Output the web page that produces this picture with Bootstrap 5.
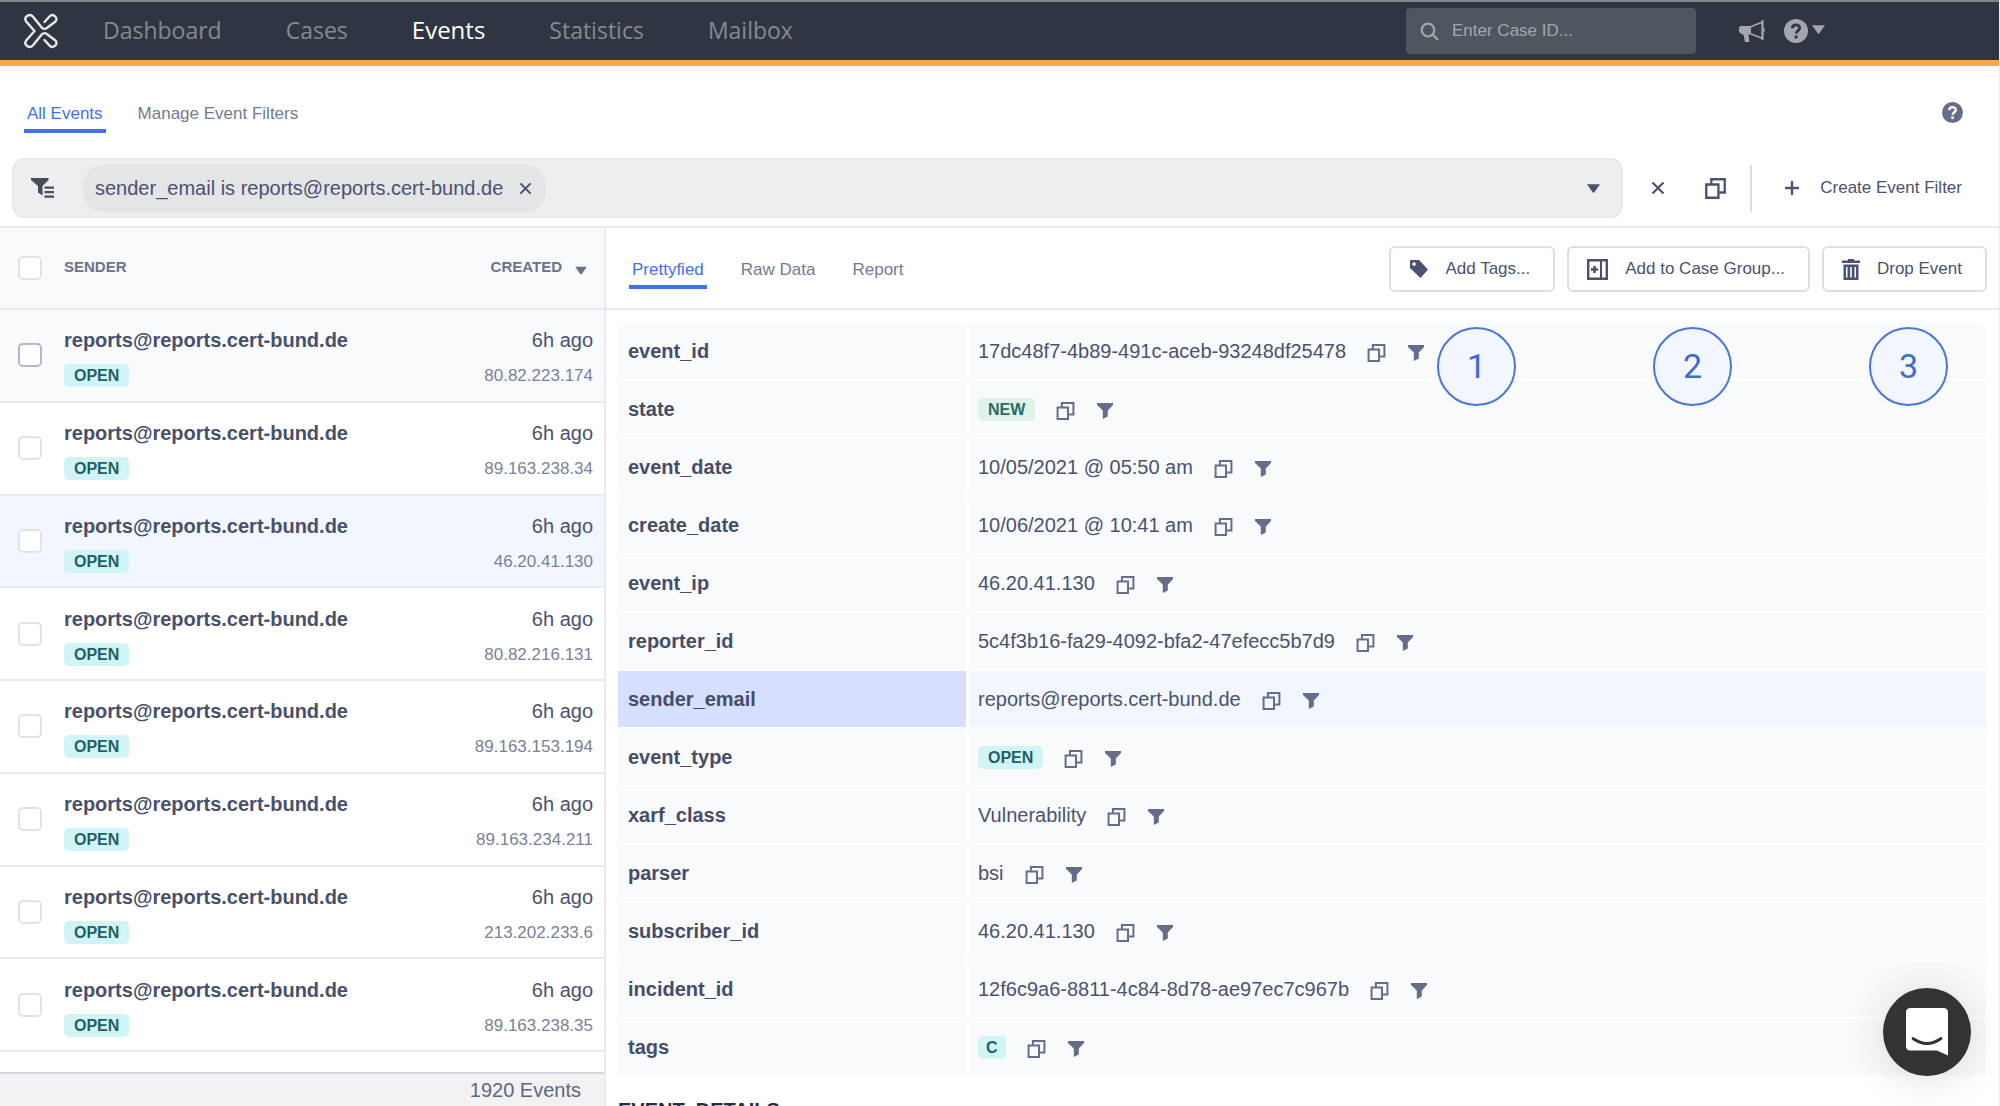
<!DOCTYPE html>
<html lang="en">
<head>
<meta charset="utf-8">
<meta name="viewport" content="width=device-width, initial-scale=1">
<title>Events</title>
<link href="https://cdn.jsdelivr.net/npm/bootstrap@5.3.0/dist/css/bootstrap.min.css" rel="stylesheet">
<style>
:root{--ink:#4a5270;--muted:#6a7290;--blue:#4070f5;--line:#e8eaf2;--soft:#f9fafc;}
body{font-family:"Liberation Sans",Arial,sans-serif;font-size:20px;line-height:24px;color:var(--ink);border-right:1px solid #ececf0;background:#fff}
a{text-decoration:none}
svg{display:block;flex:none}
button.plain{border:0;background:none;padding:0;color:inherit}
.fs-s{font-size:17px}
/* top bar */
.topbar{background:#303641;border-top:2px solid #7f838a;border-bottom:6px solid #f4aa45;height:66px;color:#a3a6ae}
.topnav{gap:64px;margin-left:45px;padding-bottom:3px;font-family:"Open Sans","Noto Sans",sans-serif;font-size:23px}
.topnav a{color:#858991}
.topnav a.active{color:#fff;font-size:24px}
.case-search{width:290px;height:46px;background:#50565f;border-radius:4px;padding:0 14px;gap:13px}
.case-search input{background:none;border:0;outline:0;color:#fff;font-size:17px;width:100%;padding:0}
.case-search input::placeholder{color:#a3a6ae;opacity:1}
.top-tools{width:303px;padding-left:43px;gap:19px}
/* tabs */
.tabline{gap:29px;font-size:17px}
.tabline a{color:#737a92;padding:0 3px 3px;border-bottom:4px solid transparent}
.tabline a.active{color:var(--blue);border-bottom-color:var(--blue)}
.subbar{padding:36px 36px 25px 24px}
/* filter */
.filterrow{padding:0 37px 8px 12px;border-bottom:2px solid var(--line);color:var(--ink)}
.filterbox{height:60px;background:#edeef0;border:2px solid #e8e8ee;border-radius:12px;padding:0 21px 0 17px}
.chip{height:47px;background:#e4e5e7;border-radius:20px;padding:0 14px 0 12px;gap:16px;margin-left:28px}
.filter-tools{gap:40px;margin-left:28px}
.vline{width:2px;height:47px;background:#dcdde6;margin-left:24px}
.create{margin-left:33px;gap:21px}
/* list */
.side{width:606px;border-right:2px solid var(--line);flex:none}
.side-head{height:82px;background:var(--soft);border-bottom:2px solid var(--line);padding:0 16px 0 18px;font-size:15px;font-weight:700;color:var(--muted)}
.side-head .titles{margin-left:22px;padding-bottom:2px}
.evlist{padding-bottom:20px}
.evrow{flex:1 1 0;border-bottom:2px solid var(--line);padding:0 11px 0 18px;min-height:0}
.evrow.hov{background:var(--soft)}
.evrow.sel{background:#f2f6fe}
.evbody{margin-left:22px;padding-top:6px}
.evrow b{color:#48506b}
.ip{font-size:17px;color:#7b8199}
.form-check-input.cb{width:24px;height:24px;margin:0;border:2px solid #e1e3ec;border-radius:5px;background-color:#fff;flex:none}
.hov .cb.cb{border-color:#b1b8cb}
.pill{display:inline-block;font-size:16px;font-weight:700;line-height:23px;height:23px;padding:0 10px;border-radius:5px;background:#d1f4f6;color:#1f5f66}
.pill-new{background:#dff3ea;color:#2a6b63}
.pill-tag{padding:0 8px}
.side-foot{height:34px;background:#f2f2f5;border-top:2px solid #d6d8df;padding-right:23px;color:#5f6680}
/* detail */
.detail-head{height:82px;border-bottom:2px solid var(--line);padding:0 12px 0 23px}
.detail-head .tabline{padding-top:30px;gap:31px}
.tool-btn{height:46px;margin-top:18px;background:#fff;border:2px solid #dcdfe9;border-radius:6px;padding:0 23px 0 18px;font-size:17px;color:var(--ink);gap:17px}
.detail-body{padding:13px 13px 0 12px}
.kv{border-collapse:separate;border-spacing:0;table-layout:fixed;width:100%}
.kv th,.kv td{height:58px;background:var(--soft);border-bottom:2px solid #fff;padding:0 9px;vertical-align:middle}
.kv th{width:351px;border-right:3px solid #fff;padding-left:10px;color:#464d68}
.kv tr:first-child th{border-top-left-radius:8px}
.kv tr:first-child td{border-top-right-radius:8px}
.kv tr.hit th{background:#d6dffe}
.kv tr.hit td{background:#f2f6fe}
.val{display:flex;align-items:center}
.val button{margin:3px 0 0 21px!important;color:#666d8b}
.val button+button{margin-left:22px!important}
.section-title{font-size:20px;font-weight:700;color:#262b44;margin:21px 0 0;line-height:24px}
.steps{top:17px;right:51px;gap:137px}
.step{width:79px;height:79px;border:2px solid #4a76d4;border-radius:50%;background:#f2f6fe;color:#3f6bd0;font:34px/1 Roboto,sans-serif;padding-bottom:2px}
.chat{right:29px;bottom:30px;width:88px;height:88px;border-radius:50%;border:0;background:#333;box-shadow:0 2px 40px rgba(0,0,0,.14)}
</style>
<script src="https://cdn.jsdelivr.net/npm/bootstrap@5.3.0/dist/js/bootstrap.bundle.min.js"></script>
</head>
<body class="vh-100 overflow-hidden d-flex flex-column">
<svg width="0" height="0" class="position-absolute" aria-hidden="true">
  <symbol id="copy" viewBox="0 0 20 20"><path d="M1.200 6.200h11.600v12.600H1.200z M6 5.500V1.200h12.800v12.600H14" fill="none" stroke="currentColor" stroke-width="2.200"/></symbol>
  <symbol id="funnel" viewBox="0 0 16 16"><path d="M0 0h16v2L10.800 7.500v6L5.800 16V7.500L0 2z" fill="currentColor"/></symbol>
  <symbol id="caret" viewBox="0 0 12 8"><path d="M0 0h12L6.800 7.500q-.8.8-1.600 0z" fill="currentColor"/></symbol>
  <symbol id="cross" viewBox="0 0 14 14"><path d="M1.500 1.500l11 11M12.500 1.500l-11 11" stroke="currentColor" stroke-width="2.200" fill="none"/></symbol>
  <symbol id="help" viewBox="0 0 24 24"><circle cx="12" cy="12" r="12" fill="currentColor"/><path d="M8.300 9.300C8.300 4.700 15.800 4.800 15.700 9.100c0 2.700-3.500 2.800-3.500 5.400" fill="none" stroke="var(--hole)" stroke-width="2.700"/><circle cx="12.100" cy="18" r="1.700" fill="var(--hole)"/></symbol>
</svg>

<header class="topbar d-flex align-items-center flex-shrink-0">
  <a href="#" aria-label="Home" class="ms-4"><svg width="34" height="36" viewBox="0 0 34 35" fill="none" stroke="#e8e9eb" stroke-width="2.400" stroke-linecap="round" stroke-linejoin="round"><path d="M20.500 8.500L25.500 3C28.500-.5 34.800 3.800 31.500 8L22.500 14.800Q20 16.300 17.500 13.800L9 3.200C5.500-.8-.8 3.500 2.200 8L10.500 17.500L2.200 27C-.8 31.500 5.500 35.800 9 31.800L17.500 21.200Q20 18.700 22.500 20.200L31.500 27C34.800 31.200 28.500 35.500 25.500 32L20.500 26.500"/></svg></a>
  <nav class="topnav d-flex align-items-center" aria-label="Main">
    <a href="#">Dashboard</a><a href="#">Cases</a><a href="#" class="active" aria-current="page">Events</a><a href="#">Statistics</a><a href="#">Mailbox</a>
  </nav>
  <label class="case-search d-flex align-items-center ms-auto">
    <svg width="19" height="19" viewBox="0 0 19 19" fill="none" stroke="currentColor" stroke-width="2.300" stroke-linecap="round"><circle cx="8" cy="8" r="6.300"/><path d="M12.800 12.800L17.300 17.300"/></svg>
    <input type="text" placeholder="Enter Case ID..." aria-label="Case ID">
  </label>
  <div class="top-tools d-flex align-items-center">
    <button class="plain" aria-label="Announcements"><svg width="26" height="23" viewBox="0 0 26 23"><path d="M11 7L23.500 2V18.500L11 13.500z" fill="none" stroke="currentColor" stroke-width="1.800"/><path d="M22.600 0h1.800v20h-1.800z" fill="currentColor"/><path d="M2 6H11.500V14.500H9.500L10.500 22H6L4.500 14.500H3L0 12V8Q0 6 2 6z" fill="currentColor"/><path d="M24.500 8q3 2 0 4.500" fill="currentColor"/></svg></button>
    <button class="plain d-flex align-items-center" aria-label="Help menu" style="--hole:#303641"><svg width="24" height="24"><use href="#help"/></svg><svg width="13" height="9" class="mb-1 ms-1"><use href="#caret"/></svg></button>
  </div>
</header>

<div class="subbar d-flex align-items-start justify-content-between">
  <nav class="tabline d-flex" aria-label="Event pages"><a href="#" class="active">All Events</a><a href="#">Manage Event Filters</a></nav>
  <button class="plain" aria-label="Help" style="--hole:#fff;color:#666d8b"><svg width="21" height="21"><use href="#help"/></svg></button>
</div>

<div class="filterrow d-flex align-items-center">
  <div class="filterbox d-flex align-items-center flex-grow-1">
    <svg width="24" height="21" viewBox="0 0 24 21" fill="#484e5c"><path d="M0 0h17.500v2L11.500 8v9.500L7 14.500V8L0 2z"/><path d="M13.500 8.500H23v2.300h-9.500zM13.500 13H23v2.300h-9.500zM13.500 17.500H23v2.300h-9.500z"/></svg>
    <span class="chip d-flex align-items-center"><span>sender_email is reports@reports.cert-bund.de</span><button class="plain" aria-label="Remove filter"><svg width="13" height="13"><use href="#cross"/></svg></button></span>
    <button class="plain ms-auto" aria-label="Show filters"><svg width="13" height="9"><use href="#caret"/></svg></button>
  </div>
  <div class="filter-tools d-flex align-items-center">
    <button class="plain" aria-label="Clear filter"><svg width="14" height="14"><use href="#cross"/></svg></button>
    <button class="plain" aria-label="Copy filter"><svg width="21" height="21"><use href="#copy"/></svg></button>
  </div>
  <div class="vline"></div>
  <button class="plain create d-flex align-items-center fs-s"><svg width="14" height="14" viewBox="0 0 14 14"><path d="M7 0v14M0 7h14" stroke="currentColor" stroke-width="2.400"/></svg>Create Event Filter</button>
</div>

<main class="d-flex flex-grow-1 overflow-hidden">
  <section class="side d-flex flex-column" aria-label="Event list">
    <div class="side-head d-flex align-items-center flex-shrink-0">
      <input class="form-check-input cb" type="checkbox" aria-label="Select all">
      <div class="titles d-flex flex-grow-1 justify-content-between"><span>SENDER</span><button class="plain d-flex align-items-end fw-bold">CREATED<svg class="ms-2 mb-1" width="18" height="9" viewBox="-5 0 18 8"><use href="#caret" width="12" height="8"/></svg></button></div>
    </div>
    <ul class="evlist list-unstyled mb-0 d-flex flex-column flex-grow-1">
      <li class="evrow hov d-flex align-items-center"><input class="form-check-input cb" type="checkbox" aria-label="Select event 80.82.223.174"><div class="evbody flex-grow-1"><div class="d-flex justify-content-between"><b>reports@reports.cert-bund.de</b><span>6h ago</span></div><div class="d-flex justify-content-between pt-2 mt-1"><span class="pill">OPEN</span><span class="ip">80.82.223.174</span></div></div></li>
      <li class="evrow d-flex align-items-center"><input class="form-check-input cb" type="checkbox" aria-label="Select event 89.163.238.34"><div class="evbody flex-grow-1"><div class="d-flex justify-content-between"><b>reports@reports.cert-bund.de</b><span>6h ago</span></div><div class="d-flex justify-content-between pt-2 mt-1"><span class="pill">OPEN</span><span class="ip">89.163.238.34</span></div></div></li>
      <li class="evrow sel d-flex align-items-center"><input class="form-check-input cb" type="checkbox" aria-label="Select event 46.20.41.130"><div class="evbody flex-grow-1"><div class="d-flex justify-content-between"><b>reports@reports.cert-bund.de</b><span>6h ago</span></div><div class="d-flex justify-content-between pt-2 mt-1"><span class="pill">OPEN</span><span class="ip">46.20.41.130</span></div></div></li>
      <li class="evrow d-flex align-items-center"><input class="form-check-input cb" type="checkbox" aria-label="Select event 80.82.216.131"><div class="evbody flex-grow-1"><div class="d-flex justify-content-between"><b>reports@reports.cert-bund.de</b><span>6h ago</span></div><div class="d-flex justify-content-between pt-2 mt-1"><span class="pill">OPEN</span><span class="ip">80.82.216.131</span></div></div></li>
      <li class="evrow d-flex align-items-center"><input class="form-check-input cb" type="checkbox" aria-label="Select event 89.163.153.194"><div class="evbody flex-grow-1"><div class="d-flex justify-content-between"><b>reports@reports.cert-bund.de</b><span>6h ago</span></div><div class="d-flex justify-content-between pt-2 mt-1"><span class="pill">OPEN</span><span class="ip">89.163.153.194</span></div></div></li>
      <li class="evrow d-flex align-items-center"><input class="form-check-input cb" type="checkbox" aria-label="Select event 89.163.234.211"><div class="evbody flex-grow-1"><div class="d-flex justify-content-between"><b>reports@reports.cert-bund.de</b><span>6h ago</span></div><div class="d-flex justify-content-between pt-2 mt-1"><span class="pill">OPEN</span><span class="ip">89.163.234.211</span></div></div></li>
      <li class="evrow d-flex align-items-center"><input class="form-check-input cb" type="checkbox" aria-label="Select event 213.202.233.6"><div class="evbody flex-grow-1"><div class="d-flex justify-content-between"><b>reports@reports.cert-bund.de</b><span>6h ago</span></div><div class="d-flex justify-content-between pt-2 mt-1"><span class="pill">OPEN</span><span class="ip">213.202.233.6</span></div></div></li>
      <li class="evrow d-flex align-items-center"><input class="form-check-input cb" type="checkbox" aria-label="Select event 89.163.238.35"><div class="evbody flex-grow-1"><div class="d-flex justify-content-between"><b>reports@reports.cert-bund.de</b><span>6h ago</span></div><div class="d-flex justify-content-between pt-2 mt-1"><span class="pill">OPEN</span><span class="ip">89.163.238.35</span></div></div></li>
    </ul>
    <div class="side-foot d-flex align-items-center justify-content-end flex-shrink-0">1920 Events</div>
  </section>

  <section class="flex-grow-1 overflow-hidden" aria-label="Event details">
    <div class="detail-head d-flex align-items-start justify-content-between">
      <nav class="tabline d-flex" aria-label="Event views"><a href="#" class="active">Prettyfied</a><a href="#">Raw Data</a><a href="#">Report</a></nav>
      <div class="d-flex" style="gap:12px">
        <button class="tool-btn d-flex align-items-center"><svg width="20" height="20" viewBox="0 0 20 20"><path fill-rule="evenodd" d="M2 1h8l9 9.500-7.500 8.500L1 9V2q0-1 1-1zM5 3.200a1.800 1.800 0 1 0 .1 0z" fill="currentColor"/></svg>Add Tags...</button>
        <button class="tool-btn d-flex align-items-center"><svg width="21" height="21" viewBox="0 0 21 21" fill="none" stroke="currentColor" stroke-width="2.400"><path d="M1.200 1.200h18.600v18.600H1.200z"/><path d="M14 1v19" stroke-width="2"/><path d="M7.500 7v7M4 10.500h7" stroke-width="2.600"/></svg>Add to Case Group...</button>
        <button class="tool-btn d-flex align-items-center"><svg width="18" height="21" viewBox="0 0 18 21"><path fill-rule="evenodd" d="M6 0h6v1.500h6V4H0V1.500h6zM1.500 5.500h15V21h-15zM4 8v10.500h1.500V8zM8.200 8v10.500h1.600V8zM12.500 8v10.500H14V8z" fill="currentColor"/></svg>Drop Event</button>
      </div>
    </div>
    <div class="detail-body position-relative">
      <table class="kv">
        <tbody>
        <tr><th scope="row">event_id</th><td><div class="val"><span>17dc48f7-4b89-491c-aceb-93248df25478</span><button class="plain" aria-label="Copy"><svg width="19" height="18"><use href="#copy"/></svg></button><button class="plain" aria-label="Filter"><svg width="16" height="16"><use href="#funnel"/></svg></button></div></td></tr>
        <tr><th scope="row">state</th><td><div class="val"><span class="pill pill-new">NEW</span><button class="plain" aria-label="Copy"><svg width="19" height="18"><use href="#copy"/></svg></button><button class="plain" aria-label="Filter"><svg width="16" height="16"><use href="#funnel"/></svg></button></div></td></tr>
        <tr><th scope="row">event_date</th><td><div class="val"><span>10/05/2021 @ 05:50 am</span><button class="plain" aria-label="Copy"><svg width="19" height="18"><use href="#copy"/></svg></button><button class="plain" aria-label="Filter"><svg width="16" height="16"><use href="#funnel"/></svg></button></div></td></tr>
        <tr><th scope="row">create_date</th><td><div class="val"><span>10/06/2021 @ 10:41 am</span><button class="plain" aria-label="Copy"><svg width="19" height="18"><use href="#copy"/></svg></button><button class="plain" aria-label="Filter"><svg width="16" height="16"><use href="#funnel"/></svg></button></div></td></tr>
        <tr><th scope="row">event_ip</th><td><div class="val"><span>46.20.41.130</span><button class="plain" aria-label="Copy"><svg width="19" height="18"><use href="#copy"/></svg></button><button class="plain" aria-label="Filter"><svg width="16" height="16"><use href="#funnel"/></svg></button></div></td></tr>
        <tr><th scope="row">reporter_id</th><td><div class="val"><span>5c4f3b16-fa29-4092-bfa2-47efecc5b7d9</span><button class="plain" aria-label="Copy"><svg width="19" height="18"><use href="#copy"/></svg></button><button class="plain" aria-label="Filter"><svg width="16" height="16"><use href="#funnel"/></svg></button></div></td></tr>
        <tr class="hit"><th scope="row">sender_email</th><td><div class="val"><span>reports@reports.cert-bund.de</span><button class="plain" aria-label="Copy"><svg width="19" height="18"><use href="#copy"/></svg></button><button class="plain" aria-label="Filter"><svg width="16" height="16"><use href="#funnel"/></svg></button></div></td></tr>
        <tr><th scope="row">event_type</th><td><div class="val"><span class="pill">OPEN</span><button class="plain" aria-label="Copy"><svg width="19" height="18"><use href="#copy"/></svg></button><button class="plain" aria-label="Filter"><svg width="16" height="16"><use href="#funnel"/></svg></button></div></td></tr>
        <tr><th scope="row">xarf_class</th><td><div class="val"><span>Vulnerability</span><button class="plain" aria-label="Copy"><svg width="19" height="18"><use href="#copy"/></svg></button><button class="plain" aria-label="Filter"><svg width="16" height="16"><use href="#funnel"/></svg></button></div></td></tr>
        <tr><th scope="row">parser</th><td><div class="val"><span>bsi</span><button class="plain" aria-label="Copy"><svg width="19" height="18"><use href="#copy"/></svg></button><button class="plain" aria-label="Filter"><svg width="16" height="16"><use href="#funnel"/></svg></button></div></td></tr>
        <tr><th scope="row">subscriber_id</th><td><div class="val"><span>46.20.41.130</span><button class="plain" aria-label="Copy"><svg width="19" height="18"><use href="#copy"/></svg></button><button class="plain" aria-label="Filter"><svg width="16" height="16"><use href="#funnel"/></svg></button></div></td></tr>
        <tr><th scope="row">incident_id</th><td><div class="val"><span>12f6c9a6-8811-4c84-8d78-ae97ec7c967b</span><button class="plain" aria-label="Copy"><svg width="19" height="18"><use href="#copy"/></svg></button><button class="plain" aria-label="Filter"><svg width="16" height="16"><use href="#funnel"/></svg></button></div></td></tr>
        <tr><th scope="row">tags</th><td><div class="val"><span class="pill pill-tag">C</span><button class="plain" aria-label="Copy"><svg width="19" height="18"><use href="#copy"/></svg></button><button class="plain" aria-label="Filter"><svg width="16" height="16"><use href="#funnel"/></svg></button></div></td></tr>
        </tbody>
      </table>
      <h2 class="section-title">EVENT_DETAILS</h2>
      <div class="steps position-absolute d-flex">
        <span class="step d-flex align-items-center justify-content-center">1</span><span class="step d-flex align-items-center justify-content-center">2</span><span class="step d-flex align-items-center justify-content-center">3</span>
      </div>
    </div>
  </section>
</main>
<button class="chat position-fixed d-flex align-items-center justify-content-center p-0" aria-label="Open chat"><svg width="42" height="48" viewBox="0 0 42 48"><path d="M4.500 0h33Q42 0 42 4.500V47.500L31 42.500H4.500Q0 42.500 0 38V4.500Q0 0 4.500 0z" fill="#fff"/><path d="M7 30.500Q21 40.500 35 30.500" fill="none" stroke="#333" stroke-width="2.800" stroke-linecap="round"/></svg></button>
</body>
</html>
